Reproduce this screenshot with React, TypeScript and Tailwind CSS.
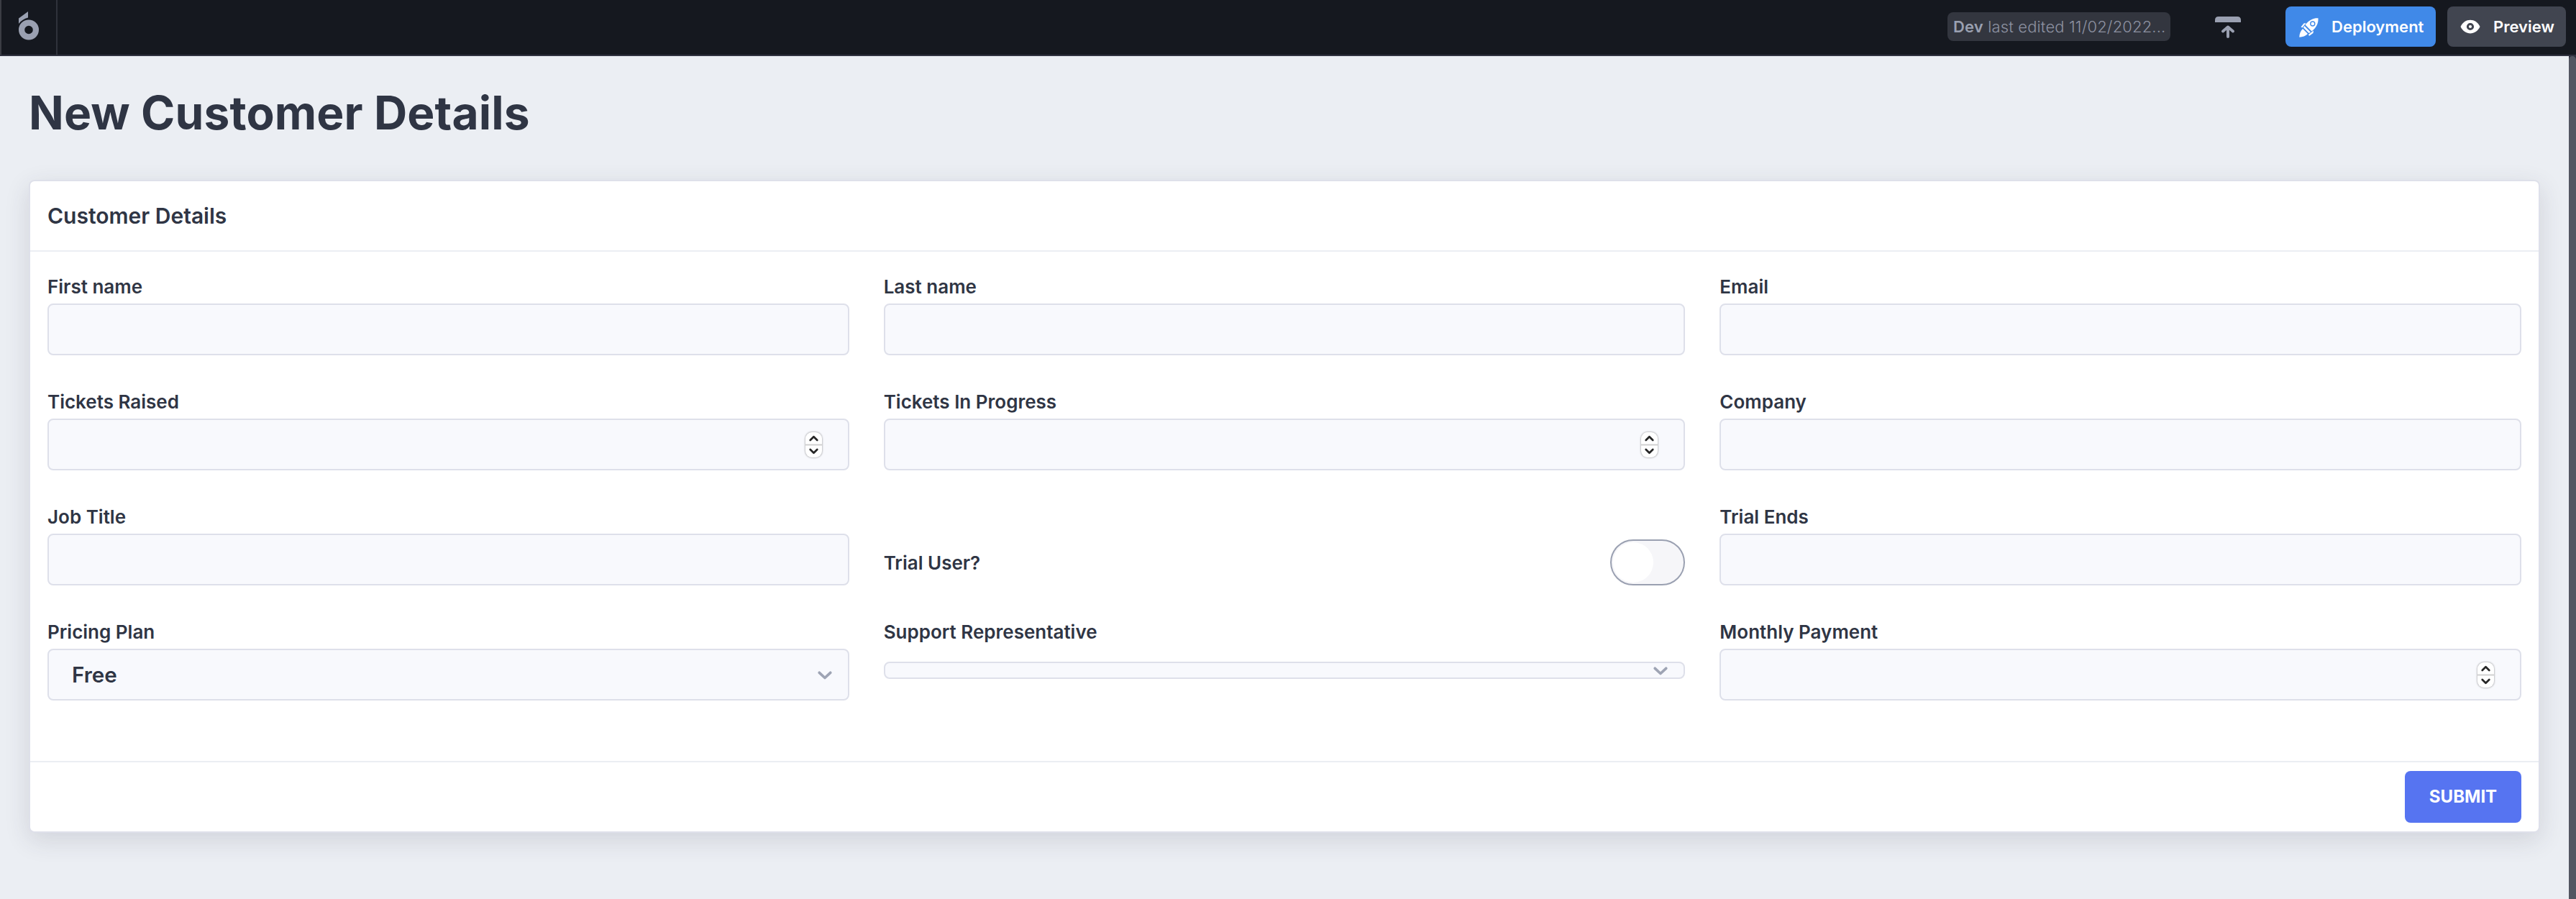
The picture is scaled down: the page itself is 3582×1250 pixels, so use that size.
import React from "react";

const label = "text-[26px] leading-[32px] font-semibold text-[#2f3544] whitespace-nowrap";
const box = "flex h-[72px] items-center rounded-[8px] border-2 border-[#dee0ea] bg-[#f8f9fd]";

function Stepper() {
  return (
    <span className="ml-auto mr-[36px] flex h-[35px] w-[23px] flex-col rounded-[9px] bg-white shadow-[0_0_2px_1px_rgba(0,0,0,0.22)]">
      <svg viewBox="0 0 23 35" className="h-[35px] w-[23px]" fill="none">
        <path d="M0 17.5H23" stroke="#d0d0d0" strokeWidth="2" />
        <path d="M6.7 11L11.5 6.2L16.300 11M6.700 24L11.500 28.800L16.300 24" stroke="#262626" strokeWidth="2.700" strokeLinecap="round" strokeLinejoin="round" />
      </svg>
    </span>
  );
}

function Chevron() {
  return (
    <svg viewBox="0 0 20 12" className="h-[12px] w-[20px]" fill="none">
      <path d="M2.300 2.300L10 9.500L17.700 2.300" stroke="#9ea4b4" strokeWidth="3.700" strokeLinecap="round" strokeLinejoin="round" />
    </svg>
  );
}

function Field({ name, stepper, value }: { name: string; stepper?: boolean; value?: string }) {
  return (
    <div className="flex h-[111px] flex-col justify-between">
      <span className={label}>{name}</span>
      <div className={box}>
        {value && <span className="pl-[32px] text-[29.500px] font-semibold text-[#2f3544]">{value}</span>}
        {value && <span className="mt-[2px] ml-auto mr-[22px] flex"><Chevron /></span>}
        {stepper && <Stepper />}
      </div>
    </div>
  );
}

export default function App() {
  return (
    <div className="flex h-[1250px] w-[3582px] flex-col overflow-hidden bg-[#ebeef3] font-['Inter',sans-serif]">
      <header className="flex h-[78px] shrink-0 items-stretch border-b-2 border-[#2f313f] bg-[#15181f]">
        <div className="flex w-[80px] border-r-2 border-l-2 border-r-[#2f323b] border-l-[#3b3d44] pt-[16px] pl-[24px]">
          <svg viewBox="0 0 28 40" className="h-[40px] w-[28px]">
            <path d="M0 9.500L13 0V8.500Q5 10.500 0 17Z" fill="#9aa0b1" />
            <circle cx="14" cy="25.500" r="9.900" fill="none" stroke="#9aa0b1" strokeWidth="8.200" />
          </svg>
        </div>
        <div className="ml-auto flex items-start">
          <div className="mt-[17px] flex h-[40px] w-[310px] items-center rounded-[8px] bg-[#33363f] pl-[8px] text-[22px] tracking-[0.15px] whitespace-nowrap text-[#8d92a2]">
            <span className="font-light"><b className="font-semibold text-[#9aa0b1]">Dev</b> last edited 11/02/2022...</span>
          </div>
          <svg viewBox="0 0 36 32" className="mt-[22px] ml-[62px] h-[32px] w-[36px]" fill="none">
            <path d="M0 9V6Q0 1 5 1H31Q36 1 36 6V9Z" fill="#9aa0b1" />
            <path d="M18 29V16M11 21.500L18 15.500L25 21.500" stroke="#9aa0b1" strokeWidth="4" strokeLinecap="round" strokeLinejoin="round" />
          </svg>
          <div className="mt-[9px] ml-[62px] flex h-[56px] w-[209px] items-center rounded-[8px] bg-[#4089e8] pl-[19px] text-white">
            <svg viewBox="0 0 27 27" className="mt-[2px] h-[27px] w-[27px]" fill="#fff">
              <path d="M26.500 0.300C20 0 14 2.500 8.500 9.500L17.500 18.500C24 13.500 27 7 26.500 0.300Z" />
              <path d="M7.300 11L16 19.700L13.500 21L6 13.500Z" />
              <circle cx="18.800" cy="8" r="3" stroke="#4089e8" strokeWidth="1.400" />
              <path d="M9.500 7L6.500 7.500L2.500 12.500L4.500 13.500ZM20 17.500L19.500 21L14 25L13 23Z" />
              <path d="M5 15L12 22C9 25 5 26.500 0.300 26.700C0.300 22 2 18 5 15Z" />
            </svg>
            <span className="ml-[18px] text-[22px] font-semibold">Deployment</span>
          </div>
          <div className="mt-[9px] mr-[14px] ml-[16px] flex h-[56px] w-[165px] items-center rounded-[8px] bg-[#414550] pl-[18px] text-white">
            <svg viewBox="0 0 28 20" className="h-[20px] w-[28px]">
              <path d="M0.500 10C6-2.500 22-2.500 27.500 10C22 22.500 6 22.500 0.500 10Z" fill="#fff" />
              <circle cx="14" cy="10" r="3.600" fill="#fff" stroke="#414550" strokeWidth="3" />
            </svg>
            <span className="ml-[18px] text-[22px] font-semibold">Preview</span>
          </div>
        </div>
      </header>
      <div className="flex flex-1 items-stretch bg-[#ebeef3]">
        <main className="w-[3572px] pl-[40px]">
          <h1 className="flex h-[172px] items-start pt-[40px] text-[64px] leading-[78px] font-bold tracking-[0.120px] text-[#2f3544]">New Customer Details</h1>
          <section className="flex h-[908px] w-[3492px] flex-col rounded-[8px] border-2 border-[#dee0ea] bg-white shadow-[0_10px_34px_rgba(47,53,68,0.14)]">
            <div className="flex h-[98px] items-center border-b-2 border-[#ebeef3] pl-[24px] text-[30px] font-semibold text-[#2f3544]">Customer Details</div>
            <div className="grid flex-1 grid-cols-3 content-start gap-x-[48px] gap-y-[49px] px-[24px] pt-[33px]">
              <Field name="First name" />
              <Field name="Last name" />
              <Field name="Email" />
              <Field name="Tickets Raised" stepper />
              <Field name="Tickets In Progress" stepper />
              <Field name="Company" />
              <Field name="Job Title" />
              <div className="flex h-[111px] items-end justify-between">
                <span className={`${label} mb-[15px]`}>Trial User?</span>
                <span className="flex h-[64px] w-[104px] items-center rounded-full border-2 border-[#9aa0b1] bg-[#f6f6f9] pl-[2px]">
                  <span className="h-[56px] w-[56px] rounded-full bg-white" />
                </span>
              </div>
              <Field name="Trial Ends" />
              <Field name="Pricing Plan" value="Free" />
              <div className="flex h-[111px] flex-col">
                <span className={label}>Support Representative</span>
                <div className="mt-[25px] flex h-[24px] items-center justify-end rounded-[8px] border-2 border-[#dee0ea] bg-[#f8f9fd] pt-[2px] pr-[22px]"><Chevron /></div>
              </div>
              <Field name="Monthly Payment" stepper />
            </div>
            <footer className="flex h-[98px] items-center justify-end border-t-2 border-[#ebeef3] pr-[24px]">
              <button className="h-[72px] w-[162px] rounded-[8px] bg-[#5674f1] text-[24px] font-bold text-white">SUBMIT</button>
            </footer>
          </section>
        </main>
        <div className="w-[10px] bg-[#2f313f]">
          <div className="h-full rounded-t-[5px] bg-[#535662]" />
        </div>
      </div>
    </div>
  );
}
